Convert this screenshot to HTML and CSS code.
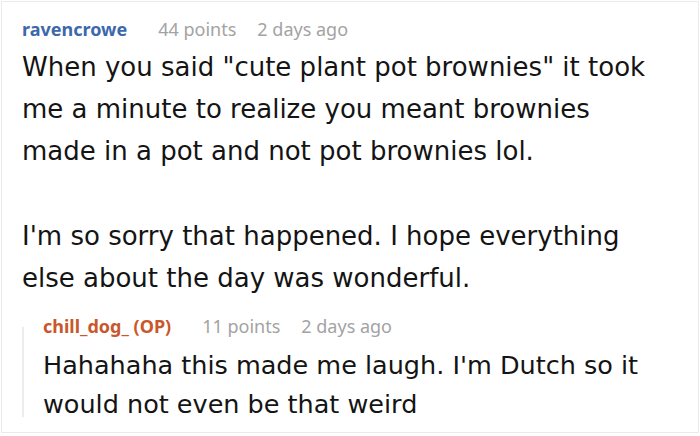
FILE: index.html
```html
<!DOCTYPE html>
<html>
<head>
<meta charset="utf-8">
<link rel="stylesheet" href="styles.css">
</head>
<body>
<div class="card">
  <div class="comment">
    <div class="meta">
      <span class="author">ravencrowe</span>
      <span class="points">44 points</span>
      <span class="time">2 days ago</span>
    </div>
    <div class="body">
      <p>When you said "cute plant pot brownies" it took me a minute to realize you meant brownies made in a pot and not pot brownies lol.</p>
      <p>I'm so sorry that happened. I hope everything else about the day was wonderful.</p>
    </div>
    <div class="reply">
      <div class="meta">
        <span class="author op">chill_dog_ (OP)</span>
        <span class="points">11 points</span>
        <span class="time">2 days ago</span>
      </div>
      <div class="body reply-body">
        <p>Hahahaha this made me laugh. I'm Dutch so it would not even be that weird</p>
      </div>
    </div>
  </div>
</div>
</body>
</html>
```

FILE: styles.css
```css
html, body {
  margin: 0;
  padding: 0;
  background: #ffffff;
}
body {
  font-family: "Noto Sans", "Open Sans", sans-serif;
  color: #1c1c1c;
}
.card {
  margin: 1px;
  height: 432px;
  box-sizing: border-box;
  border: 1px solid #ebebeb;
  padding: 15px 20px 0 20px;
  overflow: hidden;
}
.meta {
  font-size: 18px;
  line-height: 24px;
  display: flex;
  align-items: baseline;
}
.author {
  font-weight: 700;
  color: #3d68ac;
}
.author.op {
  color: #c9572b;
}
.points {
  color: #a3a3a3;
  margin-left: 31px;
}
.time {
  color: #a3a3a3;
  margin-left: 21px;
}
.body {
  margin-top: 5px;
  font-family: "DejaVu Sans", sans-serif;
  font-size: 26px;
  line-height: 42px;
  width: 630px;
  color: #141414;
}
.body p {
  margin: 0 0 43px 0;
}
.body p:last-child {
  margin-bottom: 0;
}
.reply {
  position: relative;
  margin-top: 15px;
  padding-left: 21px;
}
.reply::before {
  content: "";
  position: absolute;
  left: 0;
  top: 13px;
  bottom: 7px;
  width: 2px;
  background: #ececec;
}
.reply-body {
  margin-top: 8px;
  font-size: 25.5px;
  line-height: 39px;
  width: 615px;
}
```
